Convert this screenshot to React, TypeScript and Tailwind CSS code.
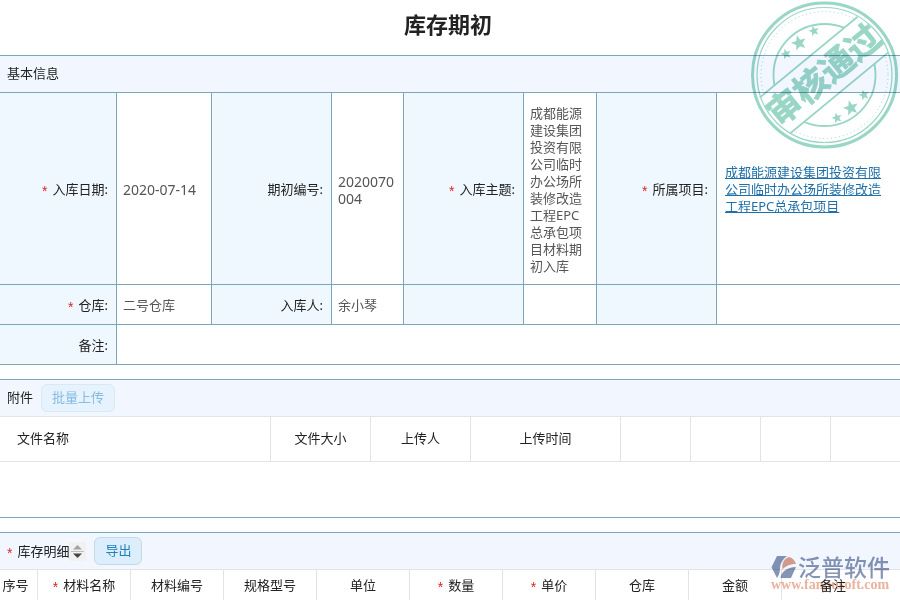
import React from 'react';

interface Column {
  label: string;
  width?: string;
  required?: boolean;
}

const FILE_COLUMNS: Column[] = [
  { label: '文件大小', width: 'w-[100px]' },
  { label: '上传人', width: 'w-[100px]' },
  { label: '上传时间', width: 'w-[150px]' },
  { label: '', width: 'w-[70px]' },
  { label: '', width: 'w-[70px]' },
  { label: '', width: 'w-[70px]' },
  { label: '' },
];

const DETAIL_COLUMNS: Column[] = [
  { label: '序号', width: 'w-[38px] pr-1.5' },
  { label: '材料名称', width: 'w-[93px]', required: true },
  { label: '材料编号', width: 'w-[93px]' },
  { label: '规格型号', width: 'w-[93px]' },
  { label: '单位', width: 'w-[93px]' },
  { label: '数量', width: 'w-[93px]', required: true },
  { label: '单价', width: 'w-[93px]', required: true },
  { label: '仓库', width: 'w-[93px]' },
  { label: '金额', width: 'w-[93px]' },
];

const STARS = [
  { x: 49, y: 43, r: 8 },
  { x: 64, y: 31, r: 5.5 },
  { x: 36, y: 54, r: 5.5 },
  { x: 101, y: 108, r: 8 },
  { x: 114, y: 95, r: 5.5 },
  { x: 87, y: 118, r: 5.5 },
];

const starPoints = (r: number) =>
  Array.from({ length: 10 }, (_, i) => {
    const radius = i % 2 === 0 ? r : r * 0.42;
    const angle = (i * Math.PI) / 5 - Math.PI / 2;
    return `${(radius * Math.cos(angle)).toFixed(2)},${(radius * Math.sin(angle)).toFixed(2)}`;
  }).join(' ');

const Required: React.FC = () => (
  <span className="mr-[5px] inline-block h-[17px] align-top font-['Liberation_Sans'] text-sm leading-[20px] text-[#e02020]">
    *
  </span>
);

const LabelCell: React.FC<{ children?: React.ReactNode; required?: boolean }> = ({ children, required }) => (
  <th
    scope="row"
    className="border-r border-b border-[#7aa7bb] bg-[#f0f8ff] pt-0.5 pr-2 text-right font-normal text-[#222]"
  >
    {required && <Required />}
    {children}
  </th>
);

const ValueCell: React.FC<{ children?: React.ReactNode }> = ({ children }) => (
  <td className="border-r border-b border-[#7aa7bb] px-1.5 pt-0.5 text-[#555]">{children}</td>
);

const ApprovedStamp: React.FC = () => (
  <svg
    className="pointer-events-none absolute top-0 right-0 mix-blend-multiply"
    width="150"
    height="152"
    viewBox="0 0 150 152"
    fill="none"
    stroke="#9ad6c5"
  >
    <defs>
      {/* everything outside the diagonal band */}
      <clipPath id="outside-band">
        <path d="M-100-100H250V-23.5H-100ZM-100 23.5H250V200H-100Z" transform="translate(74 75) rotate(-39.5)" />
      </clipPath>
    </defs>
    <circle cx="74.500" cy="75" r="72" strokeWidth="3" />
    <circle cx="74.500" cy="75" r="67.500" strokeWidth="1.2" />
    <g clipPath="url(#outside-band)">
      <circle cx="74.500" cy="75" r="63.500" strokeWidth="1" strokeDasharray="1 3" />
      <circle cx="74.500" cy="75" r="51" strokeWidth="1.8" />
    </g>
    <g transform="translate(74 75) rotate(-39.5)">
      <path d="M-64-23.5H63M-63 23.5H64" strokeWidth="1.8" />
      <text
        y="12"
        textAnchor="middle"
        className="font-['Noto_Sans_CJK_SC',sans-serif] text-[34px] font-bold"
        fill="#9ad6c5"
        strokeWidth="0.7"
      >
        审核通过
      </text>
    </g>
    {STARS.map((star) => (
      <polygon
        key={`${star.x}-${star.y}`}
        points={starPoints(star.r)}
        transform={`translate(${star.x} ${star.y}) rotate(-16)`}
        fill="#9ad6c5"
        stroke="none"
      />
    ))}
  </svg>
);

const Watermark: React.FC = () => (
  <div className="pointer-events-none absolute top-[22px] right-2.5 mix-blend-multiply">
    <div className="flex h-6 items-center justify-end">
      <svg width="27" height="24" viewBox="0 0 27 24">
        <path d="M6 1H16C11 5 9 9 9 14C9 17 8 20 6 23L0.500 12.300Z" fill="#8795b5" />
        <path d="M11.500 14.500C10.500 8 13 3.500 18 2C22 3 24 6 25 9C20 9 15 10.500 11.500 14.500Z" fill="#e0a08c" />
        <path d="M9.500 23C10 17 16 12 25 12L20 23Z" fill="#8795b5" />
      </svg>
      <span className="text-[23px] font-medium text-[#8795b5]">泛普软件</span>
    </div>
    <div className="font-['Liberation_Serif',serif] text-sm leading-3 font-bold text-[#ebb29e]">
      www.fanpusoft.com
    </div>
  </div>
);

export default function App() {
  return (
    <main className="relative overflow-hidden bg-white font-['Noto_Sans','Noto_Sans_CJK_SC',sans-serif] text-[13px] leading-[17px] text-[#222]">
      <h1 className="flex h-[55px] items-center justify-center pr-1 pb-1.5 text-[22px] font-bold">库存期初</h1>

      {/* Basic info */}
      <section className="border-t border-[#7aa7bb]">
        <h2 className="flex h-[37px] items-center border-b border-[#7aa7bb] bg-[#f1f6ff] px-[7px] pb-0.5">基本信息</h2>
        <table className="w-full table-fixed border-separate border-spacing-0">
          <colgroup>
            <col className="w-[117px]" />
            <col className="w-[95px]" />
            <col className="w-[120px]" />
            <col className="w-[72px]" />
            <col className="w-[120px]" />
            <col className="w-[73px]" />
            <col className="w-[120px]" />
            <col />
          </colgroup>
          <tbody>
            <tr className="h-[192px]">
              <LabelCell required>入库日期:</LabelCell>
              <ValueCell>
                <span className="text-sm">2020-07-14</span>
              </ValueCell>
              <LabelCell>期初编号:</LabelCell>
              <ValueCell>
                <span className="block text-sm leading-[17px] break-all">2020070004</span>
              </ValueCell>
              <LabelCell required>入库主题:</LabelCell>
              <ValueCell>成都能源建设集团投资有限公司临时办公场所装修改造工程EPC总承包项目材料期初入库</ValueCell>
              <LabelCell required>所属项目:</LabelCell>
              <td className="border-b border-[#7aa7bb] px-2 pt-0.5">
                <a href="#" className="text-[#1f6fa8] underline">
                  成都能源建设集团投资有限公司临时办公场所装修改造工程EPC总承包项目
                </a>
              </td>
            </tr>
            <tr className="h-10">
              <LabelCell required>仓库:</LabelCell>
              <ValueCell>二号仓库</ValueCell>
              <LabelCell>入库人:</LabelCell>
              <ValueCell>余小琴</ValueCell>
              <LabelCell />
              <ValueCell />
              <LabelCell />
              <td className="border-b border-[#7aa7bb]" />
            </tr>
            <tr className="h-10">
              <LabelCell>备注:</LabelCell>
              <td colSpan={7} className="border-b border-[#7aa7bb]" />
            </tr>
          </tbody>
        </table>
      </section>

      {/* Attachments */}
      <section className="mt-3.5 border-y border-[#7aa7bb]">
        <div className="flex h-[37px] items-center gap-2 border-b border-[#e3e3e3] bg-[#f1f6ff] px-[7px]">
          <h2 className="pb-0.5">附件</h2>
          <button
            type="button"
            disabled
            className="h-7 rounded-md border border-[#d9e8f5] bg-[#e6f3fe] px-2.5 pb-0.5 text-[#85bce0]"
          >
            批量上传
          </button>
        </div>
        <table className="w-full table-fixed border-separate border-spacing-0">
          <thead>
            <tr className="h-[45px]">
              <th className="w-[271px] border-r border-b border-[#e3e3e3] pb-0.5 pl-[17px] text-left font-normal">
                文件名称
              </th>
              {FILE_COLUMNS.map((col, i) => (
                <th
                  key={i}
                  className={`${col.width ?? ''} border-b border-[#e3e3e3] pb-0.5 font-normal ${col.width ? 'border-r' : ''}`}
                >
                  {col.label}
                </th>
              ))}
            </tr>
          </thead>
        </table>
        <div className="h-[55px]" />
      </section>

      {/* Stock detail */}
      <section className="relative mt-3.5 border-t border-[#7aa7bb]">
        <div className="flex h-[37px] items-center border-b border-[#e3e3e3] bg-[#f1f6ff] px-[7px]">
          <h2>
            <Required />
            库存明细
          </h2>
          <button type="button" aria-label="排序" className="mr-2 h-[19px] w-[17px] bg-[#f1f1f1]">
            <svg width="17" height="19" viewBox="0 0 17 19">
              <path d="M8.500 3L13 7.500H4Z" fill="#a3a3a3" />
              <path d="M2 9.500H15" stroke="#bdbdbd" />
              <path d="M8.500 16L13 11.500H4Z" fill="#444" />
            </svg>
          </button>
          <button
            type="button"
            className="h-7 rounded-md border border-[#c2dae9] bg-[#dceefc] px-2.5 pb-0.5 text-[#2380bb]"
          >
            导出
          </button>
        </div>
        <table className="w-full table-fixed border-separate border-spacing-0">
          <thead>
            <tr className="h-[30px]">
              {DETAIL_COLUMNS.map((col) => (
                <th key={col.label} className={`${col.width} border-r border-[#e3e3e3] font-normal whitespace-nowrap`}>
                  {col.required && <Required />}
                  {col.label}
                </th>
              ))}
              <th className="pr-4 font-normal">备注</th>
            </tr>
          </thead>
        </table>
        <Watermark />
      </section>

      <ApprovedStamp />
    </main>
  );
}
